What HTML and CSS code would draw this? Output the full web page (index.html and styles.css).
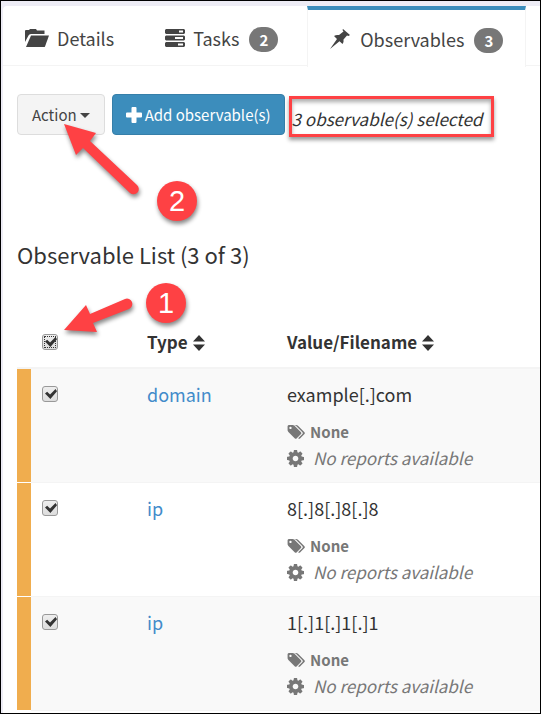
FILE: index.html
```html
<!DOCTYPE html>
<html lang="en">
<head>
<meta charset="utf-8">
<title>Observables</title>
<link rel="stylesheet" href="styles.css">
</head>
<body>
<svg class="defs" aria-hidden="true">
  <symbol id="folder" viewBox="0 0 24 18"><path d="M0 13V1.500L1 1H4L5 0H11L12 1.500H19.500V5H6Q4 5 3.500 6.500Z"/><path d="M6 6.500H24L20 17.500Q19.700 18 19 18H1Z"/></symbol>
  <symbol id="tasks" viewBox="0 0 20 18"><path fill-rule="evenodd" d="M1 0H19L20 1V4L19 5H1L0 4V1ZM14 1.500V3.500H18V1.500ZM1 6.500H19L20 7.500V10.500L19 11.500H1L0 10.500V7.500ZM10 8V10H18V8ZM1 13H19L20 14V17L19 18H1L0 17V14ZM13 14.500V16.500H18V14.500Z"/></symbol>
  <symbol id="pin" viewBox="0 0 20 20"><path d="M13 0L20 6L18.500 7L17 6.500L13.500 10.500Q14 13 12.500 15L9.500 12.200L0 20L7 10L4 7Q6 5.500 9 6L13.500 2.500L12.500 1Z"/></symbol>
  <symbol id="plus" viewBox="0 0 16 16"><path d="M5.500 1Q5.500 0 6.500 0H9.500Q10.500 0 10.500 1V5.500H15Q16 5.500 16 6.500V9.500Q16 10.500 15 10.500H10.500V15Q10.500 16 9.500 16H6.500Q5.500 16 5.500 15V10.500H1Q0 10.500 0 9.500V6.500Q0 5.500 1 5.500H5.500Z"/></symbol>
  <symbol id="sort" viewBox="0 0 12 16"><path d="M6 0L12 6.500H0ZM0 9.500H12L6 16Z"/></symbol>
  <symbol id="tags" viewBox="64 128 1984 1536"><path d="M576 448q0-53-37.500-90.500t-90.500-37.500-90.500 37.500-37.500 90.500 37.500 90.500 90.500 37.500 90.500-37.500 37.500-90.500zm1067 576q0 53-37 90l-491 492q-39 37-91 37-53 0-90-37l-715-716q-38-37-64.500-101t-26.500-117v-416q0-52 38-90t90-38h416q53 0 117 26.500t102 64.500l715 714q37 39 37 91zm384 0q0 53-37 90l-491 492q-39 37-91 37-36 0-59-14t-53-45l470-470q37-37 37-90 0-52-37-91l-715-714q-38-38-102-64.500t-117-26.500h224q53 0 117 26.500t102 64.500l715 714q37 39 37 91z"/></symbol>
  <symbol id="cog" viewBox="128 128 1536 1536"><path d="M1152 896q0-106-75-181t-181-75-181 75-75 181 75 181 181 75 181-75 75-181zm512-109v222q0 12-8 23t-20 13l-185 28q-19 54-39 91 35 50 107 138 10 12 10 25t-9 23q-27 37-99 108t-94 71q-12 0-26-9l-138-108q-44 23-91 38-16 136-29 186-7 28-36 28h-222q-14 0-24.500-8.500t-11.500-21.500l-28-184q-49-16-90-37l-141 107q-10 9-25 9-14 0-25-11-126-114-165-168-7-10-7-23 0-12 8-23 15-21 51-66.500t54-70.500q-27-50-41-99l-183-27q-13-2-21-12.500t-8-23.500v-222q0-12 8-23t19-13l186-28q14-46 39-92-40-57-107-138-10-12-10-24 0-10 9-23 26-36 98.500-107.500t94.500-71.500q13 0 26 10l138 107q44-23 91-38 16-136 29-186 7-28 36-28h222q14 0 24.500 8.500t11.500 21.500l28 184q49 16 90 37l142-107q9-9 24-9 13 0 25 10 129 119 165 170 7 8 7 22 0 12-8 23-15 21-51 66.500t-54 70.500q26 50 41 98l183 28q13 2 21 12.500t8 23.500z"/></symbol>
</svg>
<div class="page">
  <main class="card">
    <nav class="tabs">
      <a class="tab" href="#details"><svg class="icon-folder"><use href="#folder"/></svg>Details</a>
      <a class="tab" href="#tasks"><svg class="icon-tasks"><use href="#tasks"/></svg>Tasks<span class="badge">2</span></a>
      <a class="tab active" href="#observables" aria-current="page"><svg class="icon-pin"><use href="#pin"/></svg>Observables<span class="badge">3</span></a>
    </nav>
    <section class="content">
      <div class="toolbar">
        <button class="btn" type="button">Action<span class="caret"></span></button>
        <button class="btn primary" type="button"><svg class="icon-plus"><use href="#plus"/></svg>Add observable(s)</button>
        <em class="selected">3 observable(s) selected</em>
      </div>
      <h1 class="title">Observable List (3 of 3)</h1>
      <table class="list">
        <thead>
          <tr>
            <th class="mark"></th>
            <th class="pick"><input class="check focused" type="checkbox" aria-label="Select all" checked></th>
            <th class="type">Type<svg class="icon-sort"><use href="#sort"/></svg></th>
            <th>Value/Filename<svg class="icon-sort"><use href="#sort"/></svg></th>
          </tr>
        </thead>
        <tbody>
          <tr>
            <td class="mark"></td>
            <td><input class="check" type="checkbox" aria-label="Select example[.]com" checked></td>
            <td><a class="link" href="#domain">domain</a></td>
            <td>
              <div class="value">example[.]com</div>
              <div class="tags"><svg class="icon-tags"><use href="#tags"/></svg>None</div>
              <div class="reports"><svg class="icon-cog"><use href="#cog"/></svg><em>No reports available</em></div>
            </td>
          </tr>
          <tr>
            <td class="mark"></td>
            <td><input class="check" type="checkbox" aria-label="Select 8[.]8[.]8[.]8" checked></td>
            <td><a class="link" href="#ip-8">ip</a></td>
            <td>
              <div class="value">8[.]8[.]8[.]8</div>
              <div class="tags"><svg class="icon-tags"><use href="#tags"/></svg>None</div>
              <div class="reports"><svg class="icon-cog"><use href="#cog"/></svg><em>No reports available</em></div>
            </td>
          </tr>
          <tr>
            <td class="mark"></td>
            <td><input class="check" type="checkbox" aria-label="Select 1[.]1[.]1[.]1" checked></td>
            <td><a class="link" href="#ip-1">ip</a></td>
            <td>
              <div class="value">1[.]1[.]1[.]1</div>
              <div class="tags"><svg class="icon-tags"><use href="#tags"/></svg>None</div>
              <div class="reports"><svg class="icon-cog"><use href="#cog"/></svg><em>No reports available</em></div>
            </td>
          </tr>
        </tbody>
      </table>
    </section>
  </main>
  <svg class="notes" width="240" height="360" viewBox="0 0 240 360">
    <g class="note">
      <path d="M64 124L96 133L90 141L137 185A5 5 0 0 1 130 193L83 148L76 155Z"/>
      <circle cx="177" cy="201" r="20"/>
      <path d="M64 330L86 305L90 314L125 299A5 5 0 0 1 129 309L93 323L97 332Z"/>
      <circle cx="166" cy="303" r="20"/>
    </g>
    <text class="step" x="177" y="211">2</text>
    <text class="step" x="166" y="313">1</text>
  </svg>
</div>
</body>
</html>
```
FILE: styles.css
```css
* { box-sizing: border-box; }
body {
  margin: 0;
  background: #edecf5;
  color: #333;
  font: 18px/26px "Noto Sans CJK JP", "Open Sans", sans-serif;
}
svg { fill: currentColor; flex: none; }
em { font-size: 17px; }
.defs { display: none; }
.page {
  position: relative;
  min-height: 100vh;
  padding: 5px 0 0 2px;
  border: 1px solid #000;
}
.card {
  background: #fff;
  border-top-left-radius: 4px;
  padding-bottom: 2px;
}
.tabs { display: flex; height: 60px; border-bottom: 1px solid #f4f4f4; }
.tab {
  display: flex;
  align-items: center;
  padding: 5px 22px 0;
  margin-right: 7px;
  color: #444;
  text-decoration: none;
}
.tab.active {
  height: 61px;
  margin: 0;
  padding-top: 1px;
  background: #fff;
  border: solid #f4f4f4;
  border-width: 0 1px;
  border-top: 4px solid #3c8dbc;
}
.icon-folder { width: 24px; height: 18px; margin-right: 8px; }
.icon-tasks { width: 20px; height: 18px; margin-right: 8px; }
.icon-pin { width: 20px; height: 20px; margin-right: 10px; }
.badge {
  margin: 2px 0 0 10px;
  padding: 0 10px;
  border-radius: 13px;
  background: #777;
  color: #fff;
  font-size: 15px;
  font-weight: 700;
  line-height: 25px;
}
.content { padding: 28px 0 0 14px; }
.toolbar { display: flex; gap: 7px; }
.btn {
  display: flex;
  align-items: center;
  height: 41px;
  padding: 0 14px;
  border: 1px solid #ddd;
  border-radius: 4px;
  background: #f4f4f4;
  color: #444;
  font: inherit;
  font-size: 15px;
}
.btn.primary { padding: 0 13px; background: #3c8dbc; border-color: #367fa9; color: #fff; }
.caret {
  margin: 2px 0 0 3px;
  border: 5px solid transparent;
  border-top-color: currentColor;
  border-bottom: 0;
}
.icon-plus { width: 16px; height: 16px; margin-right: 3px; }
.selected {
  margin: 2px 0 0 -3px;
  padding: 7px 9px 2px 0;
  border: 3px solid #fe4144;
  box-shadow: 0 3px 4px #0006, inset 0 3px 4px #0005;
}
.title { margin: 102px 0 0; font-size: 22px; font-weight: 400; line-height: 30px; }
.list { width: 100%; margin-top: 48px; border-spacing: 0; table-layout: fixed; }
th { padding: 12px 0; border-bottom: 2px solid #f4f4f4; font-size: 17px; text-align: left; }
td { padding: 12px 0 11px; vertical-align: top; border-bottom: 1px solid #f4f4f4; }
tbody tr:nth-child(odd) { background: #f9f9f9; }
.mark { width: 14px; }
.pick { width: 116px; }
.type { width: 140px; }
td.mark { background: #f0ad4e; background-clip: padding-box; border-color: #fff; }
.check {
  appearance: none;
  display: block;
  width: 16px;
  height: 16px;
  margin: 5px 0 5px 11px;
  border: 1px solid #999;
  border-radius: 3px;
  background: linear-gradient(#eee, #ddd);
}
.check:checked::after {
  content: "";
  display: block;
  width: 12px;
  height: 10px;
  margin: 2px 0 0 2px;
  background: #333;
  clip-path: polygon(0 45%, 18% 28%, 42% 54%, 88% 0, 100% 22%, 45% 100%);
}
.check.focused { outline: 1px dotted #333; outline-offset: -3px; }
.icon-sort { width: 12px; height: 16px; margin-left: 5px; vertical-align: -2px; }
.link { color: #428bca; text-decoration: none; }
.value { margin-bottom: 12px; }
.tags, .reports { display: flex; align-items: center; color: #777; }
.tags { font-size: 15px; font-weight: 700; }
.icon-tags { width: 18px; height: 14px; margin-right: 5px; }
.icon-cog { width: 17px; height: 17px; margin-right: 9px; }
.notes { position: absolute; top: -1px; left: -1px; pointer-events: none; }
.note { fill: #fe4144; filter: drop-shadow(1px 3px 2px #0007); }
.step { fill: #fff; font: 29px "Liberation Sans", sans-serif; text-anchor: middle; }
```
